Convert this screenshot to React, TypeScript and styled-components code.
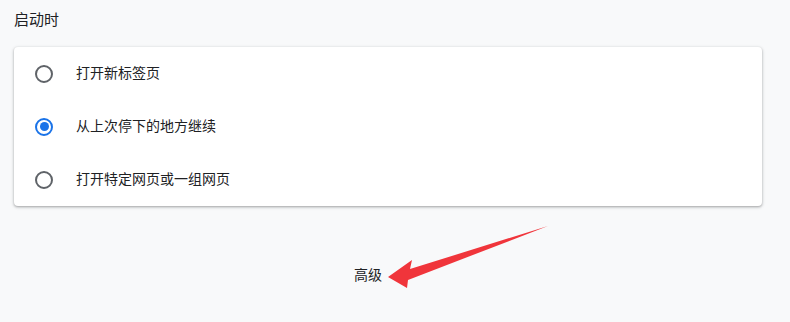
import styled, { createGlobalStyle } from 'styled-components'

const GlobalStyle = createGlobalStyle`
  html, body {
    margin: 0;
    padding: 0;
    background: #f8f9fa;
    font-family: 'Microsoft YaHei', 'Noto Sans CJK SC', 'Liberation Sans', sans-serif;
    color: #202124;
  }
`

const options = ['打开新标签页', '从上次停下的地方继续', '打开特定网页或一组网页']

export default function App(): JSX.Element {
  const selected = 1
  return (
    <Page>
      <GlobalStyle />
      <Section>
        <Title>启动时</Title>
        <Card>
          {options.map((label, i) => (
            <Row key={label}>
              <Radio checked={i === selected} />
              <Label>{label}</Label>
            </Row>
          ))}
        </Card>
        <Footer>
          <AdvancedButton>
            <span>高级</span>
            <Caret />
          </AdvancedButton>
        </Footer>
      </Section>
      <Arrow viewBox="0 0 790 322" width="790" height="322">
        <path
          d="M548 226 L410 269 L412 260 L388 277 L407 288 L408 280 Z"
          fill="#f0353b"
        />
      </Arrow>
    </Page>
  )
}

const Page = styled.div`
  position: relative;
  width: 790px;
  height: 322px;
  overflow: hidden;
`

const Section = styled.div`
  width: 748px;
  margin-left: 14px;
`

const Title = styled.div`
  height: 47px;
  padding-top: 9px;
  box-sizing: border-box;
  font-size: 15px;
  line-height: 20px;
`

const Card = styled.div`
  background: #fff;
  border-radius: 4px;
  box-shadow: 0 1px 2px rgba(60, 64, 67, 0.3), 0 1px 3px 1px rgba(60, 64, 67, 0.15);
  height: 159px;
  display: flex;
  flex-direction: column;
`

const Row = styled.div`
  height: 53px;
  display: flex;
  align-items: center;
  padding-left: 21px;
  gap: 23px;
`

const Radio = styled.span<{ checked: boolean }>`
  width: 18px;
  height: 18px;
  box-sizing: border-box;
  border-radius: 50%;
  border: 2px solid ${({ checked }) => (checked ? '#1a73e8' : '#5f6368')};
  display: flex;
  align-items: center;
  justify-content: center;
  &::after {
    content: '';
    width: 9px;
    height: 9px;
    border-radius: 50%;
    background: #1a73e8;
    display: ${({ checked }) => (checked ? 'block' : 'none')};
  }
`

const Label = styled.span`
  font-size: 14px;
  line-height: 20px;
  margin-top: -3px;
`

const Footer = styled.div`
  display: flex;
  justify-content: center;
  padding-top: 58px;
`

const AdvancedButton = styled.div`
  display: flex;
  align-items: center;
  gap: 24px;
  font-size: 14px;
  line-height: 20px;
  margin-left: -6px;
`

const Caret = styled.span`
  width: 0;
  height: 0;
  border-left: 5px solid transparent;
  border-right: 5px solid transparent;
  border-top: 5px solid #5f6368;
`

const Arrow = styled.svg`
  position: absolute;
  left: 0;
  top: 0;
  pointer-events: none;
`
